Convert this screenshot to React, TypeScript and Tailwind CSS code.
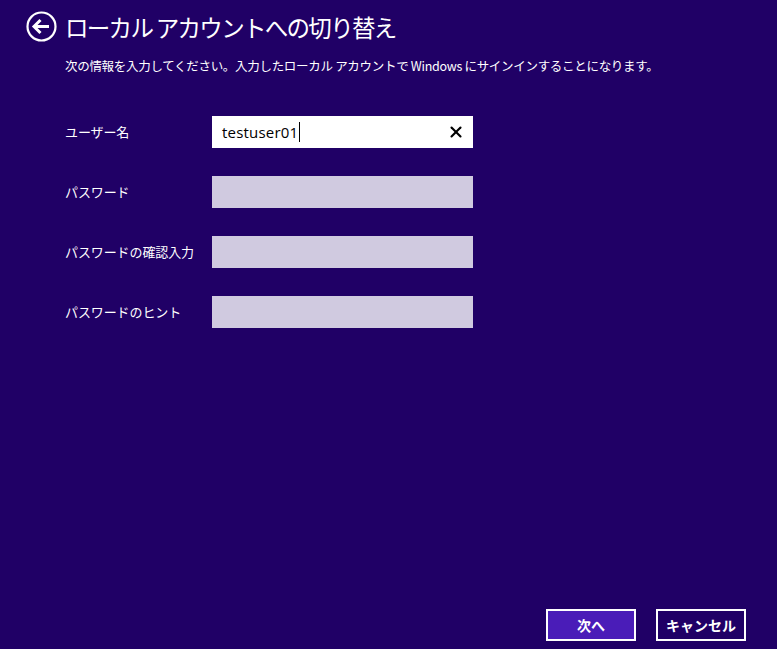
import { X } from 'lucide-react';

const jp = "font-['Noto_Sans_CJK_JP','Noto_Sans',sans-serif]";

const fields = [
  { label: 'ユーザー名', value: 'testuser01', active: true },
  { label: 'パスワード' },
  { label: 'パスワードの確認入力' },
  { label: 'パスワードのヒント' },
];

function BackIcon() {
  return (
    <svg width="31" height="31" viewBox="0 0 31 31" fill="none" className="shrink-0">
      <circle cx="15.5" cy="15.5" r="14" stroke="white" strokeWidth="2.2" />
      <path d="M8 15.5h15" stroke="white" strokeWidth="3" />
      <path d="M14.5 9l-6.5 6.5 6.5 6.5" stroke="white" strokeWidth="3" strokeLinejoin="miter" />
    </svg>
  );
}

export default function App(): JSX.Element {
  return (
    <div className={`flex h-screen flex-col bg-[#200066] text-white ${jp}`}>
      {/* Header */}
      <div className="flex items-center gap-[8px] pl-[26px] pt-[11px]">
        <BackIcon />
        <h1 className="text-[23.5px] leading-[30px] tracking-[-1.7px]">
          ローカル アカウントへの切り替え
        </h1>
      </div>
      <p className="mt-[15px] pl-[65px] text-[12.5px] leading-[18px] tracking-[-0.3px]">
        次の情報を入力してください。入力したローカル アカウントで Windows にサインインすることになります。
      </p>

      {/* Form */}
      <div className="mt-[41px] flex flex-col gap-[28px] pl-[65px]">
        {fields.map((f) => (
          <div key={f.label} className="flex items-center">
            <span className="w-[147px] text-[13px] tracking-[-0.1px]">{f.label}</span>
            {f.active ? (
              <div className="flex h-[32px] w-[261px] items-center bg-white pl-[10px] pr-[8px] text-black">
                <span className="font-['Open_Sans','Noto_Sans',sans-serif] text-[15px] tracking-[0.2px]">
                  {f.value}
                </span>
                <span className="ml-[1px] h-[20px] w-[1px] bg-black" />
                <X className="ml-auto h-[18px] w-[18px]" strokeWidth={2.8} />
              </div>
            ) : (
              <div className="h-[32px] w-[261px] bg-[#d0cae0]" />
            )}
          </div>
        ))}
      </div>

      {/* Footer */}
      <div className="mt-auto flex justify-end gap-[20px] pb-[8px] pr-[31px]">
        <button
          type="button"
          className="h-[32px] w-[90px] border-2 border-white bg-[#4a1cb8] text-[14px] font-bold"
        >
          次へ
        </button>
        <button
          type="button"
          className="h-[32px] w-[90px] border-2 border-white bg-[#200066] text-[14px] font-bold"
        >
          キャンセル
        </button>
      </div>
    </div>
  );
}
